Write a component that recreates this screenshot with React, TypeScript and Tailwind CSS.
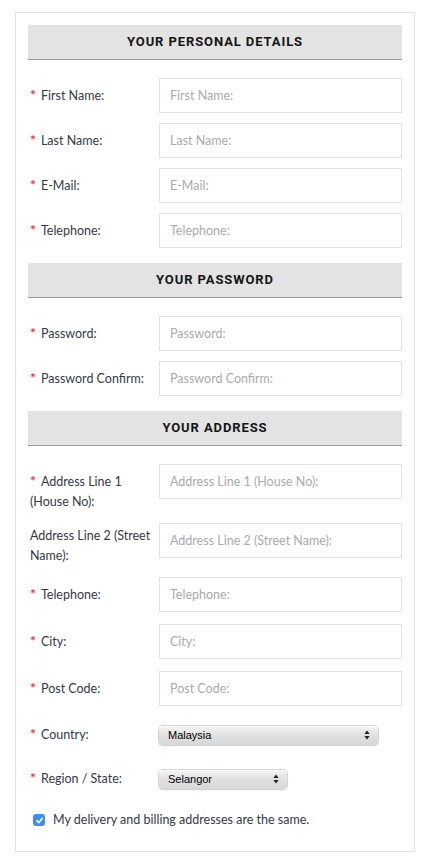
import React from "react";

const Req = () => (
  <span className="mr-[5px] text-[14px] font-bold leading-none text-[#f0323f]">*</span>
);

function Header({ title, className }: { title: string; className: string }) {
  return (
    <div
      className={`flex h-[35px] items-center justify-center border-b border-[#9a9a9a] bg-[#e3e3e3] font-['Roboto',sans-serif] text-[13px] font-bold tracking-[0.9px] text-[#151515] ${className}`}
    >
      {title}
    </div>
  );
}

function Row({
  label,
  req = true,
  placeholder,
  className = "",
  labelClass = "self-center",
}: {
  label: string;
  req?: boolean;
  placeholder: string;
  className?: string;
  labelClass?: string;
}) {
  return (
    <div className={`flex items-start ${className}`}>
      <div className={`w-[131px] shrink-0 pl-[2px] text-[12.5px] leading-[20px] text-[#343a45] ${labelClass}`}>
        {req && <Req />}
        {label}
      </div>
      <input
        placeholder={placeholder}
        className="h-[35px] min-w-0 flex-1 border border-[#e3e3e3] bg-white px-[10px] text-[12.5px] text-[#333] outline-none placeholder:text-[#ababab]"
      />
    </div>
  );
}

function Arrows() {
  return (
    <svg width="6" height="10" viewBox="0 0 6 10" className="shrink-0">
      <path d="M3 0.5 L5.6 4 H0.4 Z" fill="#222" />
      <path d="M3 9.5 L5.6 6 H0.4 Z" fill="#222" />
    </svg>
  );
}

function FakeSelect({ value, widthClass }: { value: string; widthClass: string }) {
  return (
    <div
      className={`flex h-[19px] items-center justify-between rounded-[4px] bg-gradient-to-b from-[#f4f4f4] via-[#e0e0e0] to-[#d8d8d8] pl-[9px] pr-[8px] font-['Liberation_Sans',sans-serif] text-[11px] text-black shadow-[0_0_0_1px_#d3d3d3,inset_0_1px_0_#ffffff,0_1px_2px_rgba(0,0,0,0.12)] ${widthClass}`}
    >
      <span>{value}</span>
      <Arrows />
    </div>
  );
}

function SelectRow({
  label,
  value,
  widthClass,
  className,
}: {
  label: string;
  value: string;
  widthClass: string;
  className: string;
}) {
  return (
    <div className={`flex h-[20px] items-center ${className}`}>
      <div className="w-[131px] shrink-0 pl-[2px] text-[12.5px] leading-[20px] text-[#343a45]">
        <Req />
        {label}
      </div>
      <FakeSelect value={value} widthClass={widthClass} />
    </div>
  );
}

export default function App() {
  return (
    <div className="min-h-[867px] bg-white pt-[12px] font-['Lato',sans-serif]">
      <div className="ml-[15px] w-[400px] border border-[#e2e2e2] px-3 pb-[21px] pt-3">
        <Header title="YOUR PERSONAL DETAILS" className="" />
        <div className="mt-[18px] flex flex-col gap-[10px]">
          <Row label="First Name:" placeholder="First Name:" />
          <Row label="Last Name:" placeholder="Last Name:" />
          <Row label="E-Mail:" placeholder="E-Mail:" />
          <Row label="Telephone:" placeholder="Telephone:" />
        </div>

        <Header title="YOUR PASSWORD" className="mt-[15px]" />
        <div className="mt-[18px] flex flex-col gap-[10px]">
          <Row label="Password:" placeholder="Password:" />
          <Row label="Password Confirm:" placeholder="Password Confirm:" />
        </div>

        <Header title="YOUR ADDRESS" className="mt-[15px]" />
        <div className="mt-[18px] flex flex-col">
          <Row
            label="Address Line 1 (House No):"
            placeholder="Address Line 1 (House No):"
            labelClass="pt-[8px]"
          />
          <Row
            label="Address Line 2 (Street Name):"
            req={false}
            placeholder="Address Line 2 (Street Name):"
            className="mt-[11px]"
            labelClass="pt-[3px]"
          />
          <Row label="Telephone:" placeholder="Telephone:" className="mt-[11px]" />
          <Row label="City:" placeholder="City:" className="mt-[12px]" />
          <Row label="Post Code:" placeholder="Post Code:" className="mt-[12px]" />
          <SelectRow label="Country:" value="Malaysia" widthClass="w-[219px]" className="mt-[19px]" />
          <SelectRow label="Region / State:" value="Selangor" widthClass="w-[128px]" className="mt-[24px]" />
          <label className="ml-[5px] mt-[21px] flex h-[20px] items-center gap-[8px] text-[12.5px] text-[#343a45]">
            <span className="flex h-[12px] w-[12px] items-center justify-center rounded-[3px] bg-[#3b8cf5]">
              <svg width="9" height="9" viewBox="0 0 10 10">
                <path d="M2 5.2 L4.2 7.4 L8.2 2.6" fill="none" stroke="#fff" strokeWidth="1.8" strokeLinecap="round" strokeLinejoin="round" />
              </svg>
            </span>
            My delivery and billing addresses are the same.
          </label>
        </div>
      </div>
    </div>
  );
}
